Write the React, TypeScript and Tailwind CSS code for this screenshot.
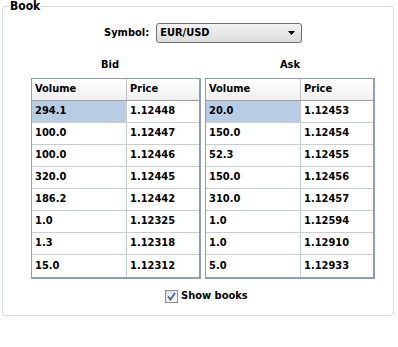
import React from "react"

const bid: [string, string][] = [
  ["294.1", "1.12448"],
  ["100.0", "1.12447"],
  ["100.0", "1.12446"],
  ["320.0", "1.12445"],
  ["186.2", "1.12442"],
  ["1.0", "1.12325"],
  ["1.3", "1.12318"],
  ["15.0", "1.12312"],
]

const ask: [string, string][] = [
  ["20.0", "1.12453"],
  ["150.0", "1.12454"],
  ["52.3", "1.12455"],
  ["150.0", "1.12456"],
  ["310.0", "1.12457"],
  ["1.0", "1.12594"],
  ["1.0", "1.12910"],
  ["5.0", "1.12933"],
]

function BookTable({ title, rows, titleClass }: { title: string; rows: [string, string][]; titleClass?: string }) {
  return (
    <div className="flex flex-col w-[170px]">
      <div className={"h-[21px] text-center " + (titleClass ?? "")}>{title}</div>
      <div className="border border-[#8f9fb1] border-r-2 border-b-2">
        {/* header */}
        <div className="flex h-[22px] bg-gradient-to-b from-white to-[#f0f0f0] border-b border-[#a0a0a0]">
          <div className="w-[95px] pl-[3px] flex items-center border-r border-[#c0c0c0]">Volume</div>
          <div className="flex-1 pl-[3px] flex items-center">Price</div>
        </div>
        {rows.map(([vol, price], i) => (
          <div key={i} className="flex h-[22px] border-b border-[#c8cdd2] last:border-b-0">
            <div
              className={
                "w-[95px] pl-[3px] flex items-center border-r border-[#c8cdd2] " +
                (i === 0 ? "bg-[#b8cce4]" : "")
              }
            >
              {vol}
            </div>
            <div className="flex-1 pl-[3px] flex items-center">{price}</div>
          </div>
        ))}
      </div>
    </div>
  )
}

export default function App() {
  return (
    <div
      className="w-[398px] h-[347px] bg-white text-[11px] font-bold text-black"
      style={{ fontFamily: "Tahoma, 'DejaVu Sans Condensed', 'DejaVu Sans', sans-serif" }}
    >
      <fieldset className="ml-[2px] w-[392px] h-[316px] border border-[#d5dfe5] rounded-[3px]">
        <legend className="ml-[6px] px-[1px] leading-[13px] text-[12px]">Book</legend>

        {/* Symbol chooser */}
        <div className="flex items-center pl-[101px] mt-[10px] gap-[7px]">
          <span>Symbol:</span>
          <div className="w-[146px] h-[20px] border border-[#707070] rounded-[3px] bg-gradient-to-b from-[#f2f2f2] to-[#dcdcdc] flex items-center justify-between pl-[3px] pr-[6px]">
            <span>EUR/USD</span>
            <svg width="7" height="4" viewBox="0 0 7 4">
              <path d="M0 0h7L3.5 4z" fill="#000" />
            </svg>
          </div>
        </div>

        {/* Bid / Ask books */}
        <div className="flex gap-[4px] pl-[28px] mt-[14px]">
          <BookTable title="Bid" rows={bid} titleClass="pr-[12px]" />
          <BookTable title="Ask" rows={ask} />
        </div>

        {/* Show books */}
        <div className="flex items-center pl-[162px] mt-[9px] gap-[3px]">
          <div className="w-[13px] h-[13px] border border-[#8e8f8f] bg-gradient-to-br from-[#dcdcdc] to-white flex items-center justify-center">
            <svg width="9" height="9" viewBox="0 0 9 9">
              <path d="M1 4.5L3.5 7.5L8 1" stroke="#4a5f97" strokeWidth="1.8" fill="none" />
            </svg>
          </div>
          <span>Show books</span>
        </div>
      </fieldset>
    </div>
  )
}
